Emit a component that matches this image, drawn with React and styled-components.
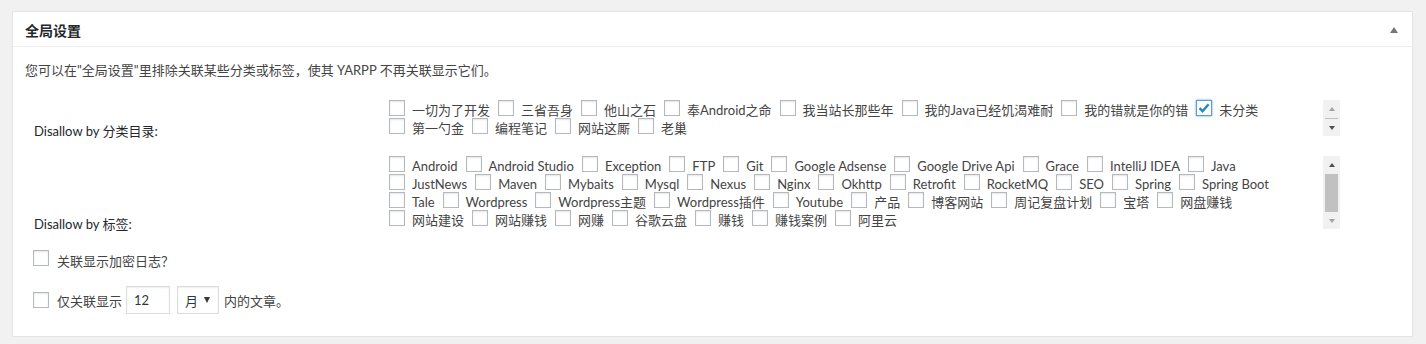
import React from "react";
import styled, { createGlobalStyle } from "styled-components";

const GlobalStyle = createGlobalStyle`
  body {
    margin: 0;
    background: #f1f1f1;
    font-family: "Segoe UI", Lato, "Noto Sans CJK SC", sans-serif;
    font-size: 13px;
    color: #444;
  }
`;

const categoryRows = [
  [
    { name: "一切为了开发" },
    { name: "三省吾身" },
    { name: "他山之石" },
    { name: "奉Android之命" },
    { name: "我当站长那些年" },
    { name: "我的Java已经饥渴难耐" },
    { name: "我的错就是你的错" },
    { name: "未分类", checked: true },
  ],
  [{ name: "第一勺金" }, { name: "编程笔记" }, { name: "网站这厮" }, { name: "老巢" }],
];

const tagRows = [
  ["Android", "Android Studio", "Exception", "FTP", "Git", "Google Adsense", "Google Drive Api", "Grace", "IntelliJ IDEA", "Java"],
  ["JustNews", "Maven", "Mybaits", "Mysql", "Nexus", "Nginx", "Okhttp", "Retrofit", "RocketMQ", "SEO", "Spring", "Spring Boot"],
  ["Tale", "Wordpress", "Wordpress主题", "Wordpress插件", "Youtube", "产品", "博客网站", "周记复盘计划", "宝塔", "网盘赚钱"],
  ["网站建设", "网站赚钱", "网赚", "谷歌云盘", "赚钱", "赚钱案例", "阿里云"],
].map((row) => row.map((name) => ({ name })));

const Checkbox = ({ checked }) => (
  <Box checked={checked}>
    {checked && (
      <svg width="14" height="14" viewBox="0 0 14 14">
        <path d="M2.5 7.2 L5.6 10.2 L11.6 3.2" fill="none" stroke="#1e8cbe" strokeWidth="2.4" />
      </svg>
    )}
  </Box>
);

const ItemList = ({ rows }) =>
  rows.map((row, i) => (
    <Line key={i}>
      {row.map((item) => (
        <Item key={item.name}>
          <Checkbox checked={item.checked} />
          <ItemText>{item.name}</ItemText>
        </Item>
      ))}
    </Line>
  ));

// the list boxes show a classic scrollbar at their right edge
const ListBox = ({ h, rows, upOn, downOn }) => (
  <ScrollBox h={h}>
    <ScrollContent>
      <ItemList rows={rows} />
    </ScrollContent>
    <Scrollbar>
      <ScrollButton>
        <Arrow up on={upOn} />
      </ScrollButton>
      <Track>
        <Thumb />
      </Track>
      <ScrollButton>
        <Arrow on={downOn} />
      </ScrollButton>
    </Scrollbar>
  </ScrollBox>
);

const App = () => {
  return (
    <>
      <GlobalStyle />
      <Postbox>
        <Header>
          <Title>全局设置</Title>
          <Toggle />
        </Header>
        <Inside>
          <Description>
            您可以在"全局设置"里排除关联某些分类或标签，使其 YARPP 不再关联显示它们。
          </Description>

          <FieldRow>
            <FieldLabel>Disallow by 分类目录:</FieldLabel>
            <ListBox h={36} rows={categoryRows} downOn />
          </FieldRow>

          <FieldRow>
            <FieldLabel>Disallow by 标签:</FieldLabel>
            <ListBox h={73} rows={tagRows} upOn />
          </FieldRow>

          <OptionLine mt={21} h={16} shift={3}>
            <Checkbox />
            <OptionText>关联显示加密日志？</OptionText>
          </OptionLine>

          <OptionLine mt={20} h={28} shift={1}>
            <Checkbox />
            <OptionText>仅关联显示</OptionText>
            <NumberInput defaultValue="12" />
            <SelectBox>
              月
              <Caret />
            </SelectBox>
            <OptionText>内的文章。</OptionText>
          </OptionLine>
        </Inside>
      </Postbox>
    </>
  );
};

const Postbox = styled.div`
  margin: 11px 13px 0 12px;
  background: #fff;
  border: 1px solid #e5e5e5;
  box-shadow: 0 1px 1px rgba(0, 0, 0, 0.04);
`;

const Header = styled.div`
  display: flex;
  align-items: center;
  justify-content: space-between;
  height: 35px;
  padding: 2px 14px 0 12px;
  box-sizing: border-box;
  border-bottom: 1px solid #eee;
`;

const Title = styled.h2`
  margin: 0;
  font-size: 14px;
  font-weight: 600;
  color: #23282d;
`;

const Toggle = styled.span`
  width: 0;
  height: 0;
  border-left: 4px solid transparent;
  border-right: 4px solid transparent;
  border-bottom: 6px solid #72777c;
`;

const Inside = styled.div`
  padding: 0 12px 22px;
`;

const Description = styled.p`
  margin: 14px 0 0;
  line-height: 19px;
`;

const FieldRow = styled.div`
  display: grid;
  grid-template-columns: 363px 952px;
  margin-top: 20px;
`;

const FieldLabel = styled.div`
  align-self: end;
  margin-bottom: -5px;
  padding-left: 9px;
  line-height: 19px;
  color: #23282d;
`;

const ScrollBox = styled.div`
  display: flex;
  height: ${(p) => p.h}px;
`;

const ScrollContent = styled.div`
  flex: 1;
  min-width: 0;
  padding-left: 1px;
`;

const Scrollbar = styled.div`
  display: flex;
  flex-direction: column;
  width: 17px;
  background: #f1f1f1;
`;

const ScrollButton = styled.div`
  display: flex;
  align-items: center;
  justify-content: center;
  height: 17px;
  flex: none;
`;

const Arrow = styled.span`
  width: 0;
  height: 0;
  border-left: 3.5px solid transparent;
  border-right: 3.5px solid transparent;
  ${(p) => (p.up ? "border-bottom" : "border-top")}: 4px solid ${(p) => (p.on ? "#505050" : "#a3a3a3")};
`;

const Track = styled.div`
  flex: 1;
  display: flex;
  padding: 1px 2px 0;
`;

const Thumb = styled.div`
  flex: 1;
  background: #c1c1c1;
`;

const Line = styled.div`
  display: flex;
  height: 18px;
  align-items: flex-start;
`;

const Item = styled.label`
  display: flex;
  align-items: flex-start;
  margin-right: 8px;
`;

const Box = styled.span`
  display: inline-flex;
  align-items: center;
  justify-content: center;
  flex: none;
  width: 16px;
  height: 16px;
  box-sizing: border-box;
  background: #fff;
  border: 1px solid ${(p) => (p.checked ? "#5b9dd9" : "#b4b9be")};
  box-shadow: ${(p) =>
    p.checked ? "0 0 2px rgba(30, 140, 190, 0.8)" : "inset 0 1px 2px rgba(0, 0, 0, 0.1)"};
`;

const ItemText = styled.span`
  margin: 2px 0 0 7px;
  line-height: 16px;
  white-space: nowrap;
`;

const OptionLine = styled.div`
  display: flex;
  align-items: center;
  height: ${(p) => p.h}px;
  margin-top: ${(p) => p.mt}px;
  padding-left: 8px;

  & > span:not(:first-child) {
    position: relative;
    top: ${(p) => p.shift}px;
  }
`;

const OptionText = styled.span`
  margin-left: 8px;
  line-height: 19px;
  white-space: nowrap;
`;

const NumberInput = styled.input`
  width: 44px;
  height: 28px;
  margin-left: 4px;
  padding: 0 7px;
  box-sizing: border-box;
  border: 1px solid #ddd;
  box-shadow: inset 0 1px 2px rgba(0, 0, 0, 0.07);
  font: inherit;
  color: #32373c;
  outline: none;
`;

const SelectBox = styled.div`
  display: flex;
  align-items: center;
  justify-content: space-between;
  width: 42px;
  height: 28px;
  margin-left: 7px;
  margin-right: -3px;
  padding: 0 8px 0 7px;
  box-sizing: border-box;
  border: 1px solid #ddd;
  box-shadow: inset 0 1px 2px rgba(0, 0, 0, 0.07);
  color: #32373c;
`;

const Caret = styled.span`
  width: 0;
  height: 0;
  border-left: 3.5px solid transparent;
  border-right: 3.5px solid transparent;
  border-top: 6px solid #32373c;
`;

export default App;
